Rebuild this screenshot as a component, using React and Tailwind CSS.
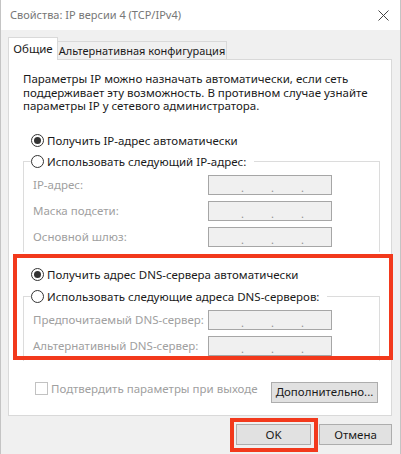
import React from "react";

// Одно поле ввода IP-адреса (неактивное, с тремя точками)
const IpBox = () => (
  <div className="w-[124px] h-[20px] border border-[#a6a6a6] bg-[#f0f0f0] relative">
    <span className="absolute left-[32px] bottom-[1px] text-[11px] leading-[11px] text-[#909090]">.</span>
    <span className="absolute left-[62px] bottom-[1px] text-[11px] leading-[11px] text-[#909090]">.</span>
    <span className="absolute left-[92px] bottom-[1px] text-[11px] leading-[11px] text-[#909090]">.</span>
  </div>
);

const FieldRow = ({ label }) => (
  <div className="flex items-center h-[20px]">
    <span className="w-[184px] pl-[9px] whitespace-nowrap text-[#a0a0a0]">{label}</span>
    <IpBox />
  </div>
);

const Radio = ({ checked, label }) => (
  <div className="flex items-center h-[14px] gap-[3px]">
    <span className="w-[13px] h-[13px] rounded-full border border-[#333] bg-white flex items-center justify-center">
      {checked && <span className="w-[7px] h-[7px] rounded-full bg-[#333]" />}
    </span>
    <span className="whitespace-nowrap">{label}</span>
  </div>
);

const Group = ({ legend, children }) => (
  <fieldset className="ml-[14px] w-[357px] border border-[#dcdcdc] border-b-0 pb-[5px]">
    <legend className="ml-[7px] pr-[8px] bg-white">
      <Radio label={legend} />
    </legend>
    <div className="flex flex-col gap-[6px] mt-[6px]">{children}</div>
  </fieldset>
);

export default function App() {
  return (
    <div
      className="w-[401px] h-[454px] bg-[#f0f0f0] relative overflow-hidden text-[11.5px] leading-[14px] text-[#1a1a1a] border-l border-r border-[#c4c4c4]"
      style={{ fontFamily: '"Noto Sans", "Liberation Sans", sans-serif' }}
    >
      {/* заголовок окна */}
      <div className="h-[30px] bg-white flex items-center justify-between pl-[9px] pr-[11px]">
        <span className="text-[11px] text-[#777]">Свойства: IP версии 4 (TCP/IPv4)</span>
        <svg width="11" height="11" viewBox="0 0 11 11" className="text-[#444]">
          <path d="M0.5 0.5 L10.5 10.5 M10.5 0.5 L0.5 10.5" stroke="currentColor" strokeWidth="1" />
        </svg>
      </div>

      <div className="pl-[7px] pt-[7px]">
        {/* вкладки */}
        <div className="flex items-end h-[22px] relative z-10">
          <div className="w-[50px] h-[23px] bg-white border border-[#d9d9d9] border-b-0 flex items-center justify-center -mb-[1px] whitespace-nowrap">
            Общие
          </div>
          <div className="w-[169px] h-[18px] bg-[#f0f0f0] border border-[#d9d9d9] border-l-0 border-b-0 flex items-center justify-center whitespace-nowrap text-[11px]">
            Альтернативная конфигурация
          </div>
        </div>

        {/* панель вкладки */}
        <div className="w-[384px] h-[357px] bg-white border border-[#d9d9d9] pt-[12px]">
          <p className="pl-[14px] leading-[13.5px]">
            Параметры IP можно назначать автоматически, если сеть
            <br />
            поддерживает эту возможность. В противном случае узнайте
            <br />
            параметры IP у сетевого администратора.
          </p>

          <div className="ml-[22px] mt-[21px] mb-[7px]">
            <Radio checked label="Получить IP-адрес автоматически" />
          </div>
          <Group legend="Использовать следующий IP-адрес:">
            <FieldRow label="IP-адрес:" />
            <FieldRow label="Маска подсети:" />
            <FieldRow label="Основной шлюз:" />
          </Group>

          <div className="ml-[22px] mt-[16px] mb-[8px]">
            <Radio checked label="Получить адрес DNS-сервера автоматически" />
          </div>
          <Group legend="Использовать следующие адреса DNS-серверов:">
            <FieldRow label="Предпочитаемый DNS-сервер:" />
            <FieldRow label="Альтернативный DNS-сервер:" />
          </Group>

          <div className="flex items-start mt-[21px]">
            <div className="ml-[26px] flex items-center gap-[3px] text-[#a0a0a0] whitespace-nowrap">
              <span className="shrink-0 w-[13px] h-[13px] border border-[#c2c2c2] bg-white" />
              <span>Подтвердить параметры при выходе</span>
            </div>
            <button className="ml-auto mr-[13px] w-[107px] h-[21px] bg-[#e1e1e1] border border-[#adadad] text-[#1a1a1a] whitespace-nowrap">
              Дополнительно...
            </button>
          </div>
        </div>

        {/* кнопки окна */}
        <div className="flex justify-end gap-[8px] pr-[8px] pt-[8px]">
          <button className="w-[75px] h-[21px] bg-[#e1e1e1] border border-[#adadad]">OK</button>
          <button className="w-[73px] h-[21px] bg-[#e1e1e1] border border-[#adadad]">Отмена</button>
        </div>
      </div>

      {/* красные рамки-выделения поверх окна */}
      <div className="absolute left-[12px] top-[254px] w-[380px] h-[106px] border-[4px] border-[#f2391c] pointer-events-none" />
      <div className="absolute left-[229px] top-[418px] w-[88px] h-[34px] border-[4px] border-[#f2391c] pointer-events-none" />
    </div>
  );
}
